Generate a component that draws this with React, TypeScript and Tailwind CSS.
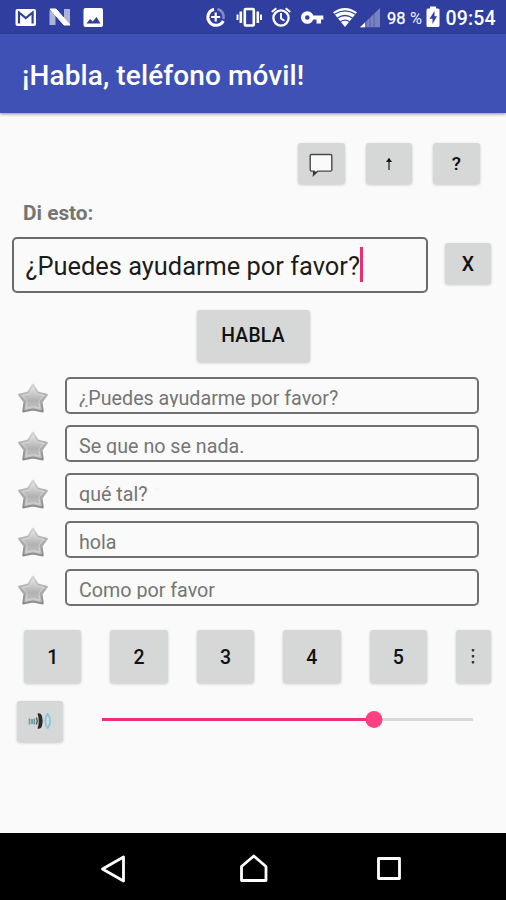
import { ReactNode } from "react";
import clsx from "clsx";

// Data
const phrases = [
  "¿Puedes ayudarme por favor?",
  "Se que no se nada.",
  "qué tal?",
  "hola",
  "Como por favor",
];

const volume = 73.3;

type ButtonProps = {
  className?: string;
  label?: string;
  children: ReactNode;
};

const Button = ({ className, label, children }: ButtonProps) => (
  <button
    type="button"
    aria-label={label}
    className={clsx(
      "flex shrink-0 items-center justify-center rounded-[3px] bg-[#d6d7d7] font-medium text-[#111] shadow-[0_1px_3px_rgba(0,0,0,0.2)]",
      className
    )}
  >
    {children}
  </button>
);

const StatusBar = () => (
  <div className="h-[34px] bg-[#303f9f] text-white">
    <svg width="506" height="34" viewBox="0 0 506 34" fill="#fff">
      {/* Mail */}
      <rect x="15.5" y="9" width="20.5" height="17" rx="2" />
      <path d="M19 23.5V12.5l6.8 5.5 6.8-5.5v11" fill="none" stroke="#303f9f" strokeWidth="2.2" />
      {/* Android N */}
      <path d="M49.5 10l6 4v11h-6zM64 9h6v16l-6-4z" opacity=".6" />
      <path d="M50 9h6l14 16h-6z" stroke="#fff" strokeWidth="1" />
      {/* Picture */}
      <rect x="83.5" y="8" width="19.5" height="19" rx="2" />
      <path d="M86.5 23.5l3.5-4.5 2.8 2.5 3.7-4.5 4 6.5z" fill="#303f9f" />
      {/* Data saver */}
      <path d="M214 9.2a8.2 8.2 0 1 0 9.3 11.8" fill="none" stroke="#fff" strokeWidth="3" />
      <path d="M217.5 9a8.3 8.3 0 0 1 6 10" fill="none" stroke="#fff" strokeWidth="2.6" opacity=".4" />
      <path d="M215.7 12.5v9M211.2 17h9" stroke="#fff" strokeWidth="2.2" />
      {/* Vibration */}
      <rect x="244.8" y="9" width="9" height="16.5" rx="1" fill="none" stroke="#fff" strokeWidth="2.6" />
      <path d="M240.8 11.500v11.500M257.800 11.500v11.500" stroke="#fff" strokeWidth="2.600" />
      <path d="M237.500 14.500v5.500M261 14.500v5.500" stroke="#fff" strokeWidth="2" />
      {/* Alarm */}
      <circle cx="281" cy="18" r="7.6" fill="none" stroke="#fff" strokeWidth="2.3" />
      <path d="M281 13v5.5l3.5 2.2M271.800 12l4.500-3.800M290.200 12l-4.500-3.800" fill="none" stroke="#fff" strokeWidth="1.9" />
      {/* VPN key */}
      <circle cx="307.3" cy="17.5" r="4.3" fill="none" stroke="#fff" strokeWidth="4" />
      <path d="M310 15.400h13.300v4.200H321v4h-4.500v-4H310z" />
      {/* Wifi */}
      <path d="M333 12.300Q345 3.500 357 12.300L345 27z" />
      <path d="M334.500 14.300q10.500-7 21 0M337.500 18q7.500-5 15 0M340.500 21.700q4.500-3 9 0" fill="none" stroke="#303f9f" strokeWidth="1.3" />
      {/* Signal */}
      <path d="M360 27.200L380 8v19.200z" opacity=".35" />
      <path d="M360 27.200l5-4.800v4.800z" />
      <path d="M366 9v18M370 9v18M374 9v18" stroke="#303f9f" strokeWidth=".8" opacity=".6" />
      <text x="387" y="24" fontSize="17" textLength="18.5" lengthAdjust="spacingAndGlyphs" stroke="#fff" strokeWidth=".3">98</text>
      <text x="410" y="23.5" fontSize="16" textLength="12" lengthAdjust="spacingAndGlyphs" opacity=".9">%</text>
      {/* Battery */}
      <path d="M426.500 10q0-1.500 1.500-1.500h2V6.500h6v2h2q1.500 0 1.500 1.500v15.500q0 1.500-1.500 1.500h-10q-1.500 0-1.500-1.500z" />
      <path d="M434.500 11l-5 7.800h3v5.200l4.500-7.700h-2.500z" fill="#303f9f" />
      <text x="445.5" y="25" fontSize="19.5" fontWeight="500" textLength="50">09:54</text>
    </svg>
  </div>
);

const Star = () => (
  <svg width="32" height="32" viewBox="0 0 32 32" className="mt-[5px] shrink-0">
    <defs>
      <linearGradient id="star" x1="0" y1="0" x2="0" y2="1">
        <stop offset="0" stopColor="#e8e8e8" />
        <stop offset=".6" stopColor="#b2b2b2" />
        <stop offset="1" stopColor="#c6c6c6" />
      </linearGradient>
      <linearGradient id="edge" x1="0" y1="0" x2="0" y2="1">
        <stop offset="0" stopColor="#d6d6d6" />
        <stop offset=".5" stopColor="#aaa" />
        <stop offset="1" stopColor="#8c8c8c" />
      </linearGradient>
    </defs>
    <path d="M16 2.500l4.800 8 9.200 2.100-5.500 7.200 1.300 9.600L16 27.600 6.200 29.400l1.300-9.600L2 12.600l9.200-2.100z" fill="url(#star)" stroke="url(#edge)" strokeWidth="2" strokeLinejoin="round" />
    <path d="M16 5.500l3.500 6.600 7.300 1.500-5 5.600 1 7.200-6.800-1.800-6.800 1.800 1-7.200-5-5.600 7.300-1.500z" fill="none" stroke="#e6e6e6" strokeWidth="1" opacity=".5" />
  </svg>
);

const App = () => {
  return (
    <div className="flex h-[900px] w-[506px] flex-col overflow-hidden bg-[#fafafa] font-['Roboto','Liberation_Sans',sans-serif]">
      <StatusBar />

      {/* App bar */}
      <header className="flex h-[78.5px] shrink-0 items-center bg-[#3f51b5] pl-[22px] pt-[6px] shadow-[0_1px_3px_rgba(0,0,0,0.45)]">
        <h1 className="whitespace-nowrap text-[28px] font-medium tracking-[0.1px] text-white">¡Habla, teléfono móvil!</h1>
      </header>

      <main className="h-[720.5px] shrink-0">
        {/* Top actions */}
        <div className="flex justify-end gap-[21px] pt-[30.5px] pr-[26.5px]">
          <Button label="Mensajes" className="h-[41px] w-[46.5px]">
            <svg width="26" height="26" viewBox="0 0 26 26">
              <path d="M3.500 3.500h19q1.300 0 1.300 1.300v14q0 1.300-1.300 1.300H10l-4.500 4 .6-4H3.500q-1.300 0-1.300-1.300v-14q0-1.300 1.300-1.300z" fill="#fafafa" stroke="#484848" strokeWidth="1.4" />
              <path d="M4.800 20.500h4.800L5.300 24.500z" fill="#333" />
            </svg>
          </Button>
          <Button label="Subir" className="h-[41px] w-[46.5px]">
            <svg width="8" height="14" viewBox="0 0 8 14">
              <path d="M4 4v9" stroke="#666" strokeWidth="2" />
              <path d="M4 .8l3 4.200H1z" fill="#111" />
            </svg>
          </Button>
          <Button className="h-[41px] w-[46.5px] pt-[2px] text-[19px]">?</Button>
        </div>

        <p className="mt-[17px] pl-[23px] text-[20.8px] leading-[24px] font-bold text-[#757575]">Di esto:</p>

        {/* Text to be spoken */}
        <div className="mt-[12px] flex items-center gap-[17.5px] pl-[12px]">
          <div className="flex h-[56px] w-[415.5px] items-center rounded-[5px] border-2 border-[#6b6b6b] pl-[11.5px]">
            <span className="whitespace-nowrap pt-[2px] text-[25.4px] text-[#1c1c1c]">¿Puedes ayudarme por favor?</span>
            <span className="-mt-px h-[35px] w-[3px] bg-[#ec2d72]" />
          </div>
          <Button className="-mt-[3px] h-[41px] w-[46px] pt-[3px] text-[19.5px]">X</Button>
        </div>

        <div className="mt-[17px] flex justify-center">
          <Button className="h-[52px] w-[113px] pt-[1px] text-[19.3px] tracking-[0.3px]">HABLA</Button>
        </div>

        {/* Phrase history */}
        <ul className="mt-[15px] flex flex-col gap-[11px]">
          {phrases.map((phrase) => (
            <li key={phrase} className="flex h-[37px] gap-[16px] pl-[17px]">
              <Star />
              <div className="h-[36.5px] w-[413.5px] rounded-[5px] border-[2.5px] border-[#707070] px-[12px]">
                <div className="h-[28px] overflow-hidden pt-[8px] text-[19.7px] leading-[24px] text-[#757575]">
                  <span className="whitespace-nowrap">{phrase}</span>
                </div>
              </div>
            </li>
          ))}
        </ul>

        {/* Presets */}
        <div className="mt-[24px] flex gap-[29px] pl-[24px]">
          {[1, 2, 3, 4, 5].map((n) => (
            <Button key={n} className="h-[52.5px] w-[57.4px] pt-[2px] text-[19.5px]">
              {n}
            </Button>
          ))}
          <Button label="Más" className="h-[52.5px] w-[35px]">
            <svg width="4" height="18" viewBox="0 0 4 18" fill="#333">
              <rect x=".8" y="2" width="2.4" height="2.4" rx=".6" />
              <rect x=".8" y="8" width="2.4" height="2.4" rx=".6" />
              <rect x=".8" y="14" width="2.4" height="2.4" rx=".6" />
            </svg>
          </Button>
        </div>

        {/* Volume */}
        <div className="mt-[18px] flex items-center pl-[17px]">
          <Button label="Volumen" className="h-[41px] w-[46px]">
            <svg width="26" height="22" viewBox="0 0 26 22" fill="none">
              <path d="M2.500 8.500v6M5 9v5M7.300 8.500v6" stroke="#6f9a9a" strokeWidth="1.7" />
              <path d="M10.500 3.500q3.500-1 4.500 2.500 1.500 5.500 0 10-1 3.500-4.500 2.500 2.500-7.500 0-15z" fill="#2a2a2a" />
              <path d="M9.500 7.500q1.500 3.500 0 7" stroke="#444" strokeWidth="1.2" />
              <path d="M20.500 3.500q-4.500 7.500 0 15M20.500 3.500q5.500 7.500 0 15" stroke="#83c6e0" strokeWidth="1.7" />
            </svg>
          </Button>
          <div className="relative -mt-[4px] ml-[39px] h-[3px] w-[371px] bg-[#d8d8d8]">
            <div className="h-full bg-[#f02f78]" style={{ width: `${volume}%` }} />
            <div
              className="absolute -top-[7px] size-[17px] -translate-x-1/2 rounded-full bg-[#ff4081]"
              style={{ left: `${volume}%` }}
            />
          </div>
        </div>
      </main>

      {/* Navigation bar */}
      <nav className="flex h-[67px] shrink-0 items-center bg-black pt-[4px]">
        <svg width="506" height="40" viewBox="0 0 506 40" fill="none" stroke="#fff" strokeWidth="2.8" strokeLinejoin="round">
          <path d="M102.500 20L123.500 8v24z" />
          <path d="M241.500 31.500V17.500L253.800 7l12.200 10.500v14z" />
          <path d="M378.500 9.500h21v20h-21z" />
        </svg>
      </nav>
    </div>
  );
};

export default App;
